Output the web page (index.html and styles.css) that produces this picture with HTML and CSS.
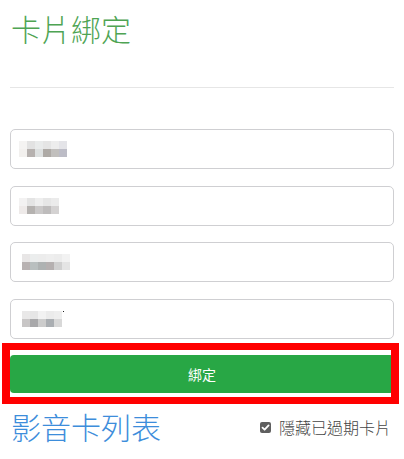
FILE: index.html
```html
<!DOCTYPE html>
<html lang="zh-Hant">
<head>
<meta charset="utf-8">
<link rel="stylesheet" href="styles.css">
</head>
<body>
<div class="page">
  <h2 class="title title-green">卡片綁定</h2>
  <hr class="divider">
  <form class="bind-form">
    <div class="field">
      <svg class="mosaic" width="48" height="16" viewBox="0 0 48 16">
        <rect x="0" y="0" width="8" height="8" fill="#f4f3f2"/><rect x="8" y="0" width="8" height="8" fill="#e2e2e2"/><rect x="16" y="0" width="8" height="8" fill="#e9ebeb"/><rect x="24" y="0" width="8" height="8" fill="#e5e5e5"/><rect x="32" y="0" width="8" height="8" fill="#ededed"/><rect x="40" y="0" width="8" height="8" fill="#e4e4e8"/>
        <rect x="0" y="8" width="8" height="8" fill="#f2f0ee"/><rect x="8" y="8" width="8" height="8" fill="#b6b1af"/><rect x="16" y="8" width="8" height="8" fill="#dde0e0"/><rect x="24" y="8" width="8" height="8" fill="#aeaaa6"/><rect x="32" y="8" width="8" height="8" fill="#c1bfbd"/><rect x="40" y="8" width="8" height="8" fill="#bcbcc6"/>
      </svg>
    </div>
    <div class="field">
      <svg class="mosaic" width="40" height="16" viewBox="0 0 40 16">
        <rect x="0" y="0" width="8" height="8" fill="#f3f2f2"/><rect x="8" y="0" width="8" height="8" fill="#e4e4e4"/><rect x="16" y="0" width="8" height="8" fill="#eeeeee"/><rect x="24" y="0" width="8" height="8" fill="#e6e6e6"/><rect x="32" y="0" width="8" height="8" fill="#ebebeb"/>
        <rect x="0" y="8" width="8" height="8" fill="#eeeae9"/><rect x="8" y="8" width="8" height="8" fill="#b5b2b0"/><rect x="16" y="8" width="8" height="8" fill="#cac8c8"/><rect x="24" y="8" width="8" height="8" fill="#bebcbc"/><rect x="32" y="8" width="8" height="8" fill="#d4d2d2"/>
      </svg>
    </div>
    <div class="field field-shift">
      <svg class="mosaic" width="48" height="16" viewBox="0 0 48 16">
        <rect x="0" y="0" width="8" height="8" fill="#e8e6e6"/><rect x="8" y="0" width="8" height="8" fill="#ebeded"/><rect x="16" y="0" width="8" height="8" fill="#ececec"/><rect x="24" y="0" width="8" height="8" fill="#eeeeee"/><rect x="32" y="0" width="8" height="8" fill="#ececec"/><rect x="40" y="0" width="8" height="8" fill="#f2f2f2"/>
        <rect x="0" y="8" width="8" height="8" fill="#b8b2b2"/><rect x="8" y="8" width="8" height="8" fill="#b9bfbf"/><rect x="16" y="8" width="8" height="8" fill="#aeb2b2"/><rect x="24" y="8" width="8" height="8" fill="#b5b0b0"/><rect x="32" y="8" width="8" height="8" fill="#d0d0d0"/><rect x="40" y="8" width="8" height="8" fill="#e4e4e4"/>
      </svg>
    </div>
    <div class="field field-shift">
      <svg class="mosaic" width="44" height="16" viewBox="0 0 44 16">
        <rect x="0" y="0" width="8" height="8" fill="#e9e8e8"/><rect x="8" y="0" width="8" height="8" fill="#e6e6e6"/><rect x="16" y="0" width="8" height="8" fill="#f2f2f2"/><rect x="24" y="0" width="8" height="8" fill="#ebebeb"/><rect x="32" y="0" width="8" height="8" fill="#eeeeee"/>
        <rect x="0" y="8" width="8" height="8" fill="#c8c6c6"/><rect x="8" y="8" width="8" height="8" fill="#a8a8aa"/><rect x="16" y="8" width="8" height="8" fill="#cccccc"/><rect x="24" y="8" width="8" height="8" fill="#aaaeb2"/><rect x="32" y="8" width="8" height="8" fill="#d8d8d8"/>
        <rect x="41" y="0" width="1" height="1" fill="#222"/>
      </svg>
    </div>
    <div class="btn-wrap">
      <button type="button" class="btn-bind">綁定</button>
      <div class="highlight"></div>
    </div>
  </form>
  <div class="list-header">
    <h2 class="title title-blue">影音卡列表</h2>
    <label class="hide-expired">
      <span class="check-box">
        <svg width="11" height="11" viewBox="0 0 11 11"><path d="M2.5 5.6 L4.6 7.7 L8.6 3.4" fill="none" stroke="#fff" stroke-width="1.8" stroke-linecap="round" stroke-linejoin="round"/></svg>
      </span>
      <span class="check-label">隱藏已過期卡片</span>
    </label>
  </div>
</div>
</body>
</html>
```

FILE: styles.css
```css
* { box-sizing: border-box; }
html, body { margin: 0; padding: 0; background: #fff; }
body {
  font-family: "Noto Sans CJK TC", "Noto Sans", sans-serif;
  color: #333;
}
.page {
  padding: 0 10px;
}
.title {
  margin: 0;
  font-size: 30px;
  font-weight: 300;
  line-height: 36px;
}
.title-green {
  color: #4ea453;
  padding: 10px 0 0 1px;
}
.title-blue {
  color: #3d8ddb;
  padding-left: 1px;
}
.divider {
  border: 0;
  border-top: 1px solid #e6e6e6;
  margin: 41px 0 0;
}
.bind-form {
  display: flex;
  flex-direction: column;
  gap: 16.7px;
  padding-top: 41px;
}
.field {
  height: 40px;
  border: 1px solid #cfcfd2;
  border-radius: 5px;
  display: flex;
  align-items: center;
  padding-left: 8px;
}
.field-shift { padding-left: 11px; }
.mosaic { display: block; }
.btn-wrap {
  position: relative;
  margin-top: -0.7px;
}
.btn-bind {
  display: block;
  width: 100%;
  height: 38px;
  border: 0;
  border-radius: 4px;
  background: #28a745;
  color: #fff;
  font-family: inherit;
  font-size: 14px;
  line-height: 38px;
  padding: 0;
}
.highlight {
  position: absolute;
  left: -8px;
  right: -5px;
  top: -12px;
  bottom: -11px;
  border: solid #ff0000;
  border-width: 7px 8px;
  pointer-events: none;
}
.list-header {
  display: flex;
  justify-content: space-between;
  align-items: center;
  margin-top: 15px;
  padding-right: 3px;
}
.hide-expired {
  display: flex;
  align-items: center;
  gap: 8px;
  margin-top: 2px;
}
.check-box {
  width: 11px;
  height: 11px;
  border-radius: 2px;
  background: #5f5f5f;
  display: flex;
}
.check-label {
  font-size: 16px;
  font-weight: 300;
  color: #444;
  line-height: 20px;
}
```
